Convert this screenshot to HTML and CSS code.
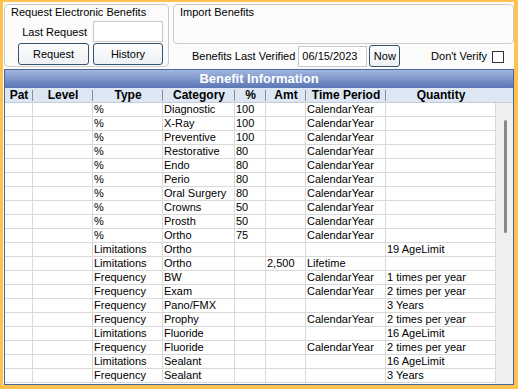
FILE: index.html
```html
<!DOCTYPE html>
<html lang="en">
  <head>
    <meta charset="UTF-8" />
    <meta name="viewport" content="width=device-width, initial-scale=1.0" />
    <title>Benefit Information</title>
    <link rel="stylesheet" href="styles.css">
  </head>
  <body>
    <div class="window">
      <div class="top">
        <div class="group request">
          <div class="group-title">Request Electronic Benefits</div>
          <div class="request-form">
            <span class="field-label">Last Request</span>
            <span class="text-box"></span>
            <button class="btn">Request</button>
            <button class="btn">History</button>
          </div>
        </div>

        <div class="right-col">
          <div class="group import">
            <div class="group-title">Import Benefits</div>
          </div>
          <div class="verify-row">
            <span class="verify-label">Benefits Last Verified</span>
            <span class="text-box date-box">06/15/2023</span>
            <button class="btn now-btn">Now</button>
            <span class="dont-verify">Don't Verify</span>
            <span class="check-box"></span>
          </div>
        </div>
      </div>

      <div class="grid">
        <div class="grid-title">Benefit Information</div>
        <div class="grid-head">
          <span>Pat</span>
          <span>Level</span>
          <span>Type</span>
          <span>Category</span>
          <span>%</span>
          <span>Amt</span>
          <span>Time Period</span>
          <span class="last">Quantity</span>
        </div>

        <div class="grid-body">
          <div class="rows">
            <div class="row"><span></span><span></span><span>%</span><span>Diagnostic</span><span>100</span><span></span><span>CalendarYear</span><span></span></div>
            <div class="row"><span></span><span></span><span>%</span><span>X-Ray</span><span>100</span><span></span><span>CalendarYear</span><span></span></div>
            <div class="row"><span></span><span></span><span>%</span><span>Preventive</span><span>100</span><span></span><span>CalendarYear</span><span></span></div>
            <div class="row"><span></span><span></span><span>%</span><span>Restorative</span><span>80</span><span></span><span>CalendarYear</span><span></span></div>
            <div class="row"><span></span><span></span><span>%</span><span>Endo</span><span>80</span><span></span><span>CalendarYear</span><span></span></div>
            <div class="row"><span></span><span></span><span>%</span><span>Perio</span><span>80</span><span></span><span>CalendarYear</span><span></span></div>
            <div class="row"><span></span><span></span><span>%</span><span>Oral Surgery</span><span>80</span><span></span><span>CalendarYear</span><span></span></div>
            <div class="row"><span></span><span></span><span>%</span><span>Crowns</span><span>50</span><span></span><span>CalendarYear</span><span></span></div>
            <div class="row"><span></span><span></span><span>%</span><span>Prosth</span><span>50</span><span></span><span>CalendarYear</span><span></span></div>
            <div class="row"><span></span><span></span><span>%</span><span>Ortho</span><span>75</span><span></span><span>CalendarYear</span><span></span></div>
            <div class="row"><span></span><span></span><span>Limitations</span><span>Ortho</span><span></span><span></span><span></span><span>19 AgeLimit</span></div>
            <div class="row"><span></span><span></span><span>Limitations</span><span>Ortho</span><span></span><span>2,500</span><span>Lifetime</span><span></span></div>
            <div class="row"><span></span><span></span><span>Frequency</span><span>BW</span><span></span><span></span><span>CalendarYear</span><span>1 times per year</span></div>
            <div class="row"><span></span><span></span><span>Frequency</span><span>Exam</span><span></span><span></span><span>CalendarYear</span><span>2 times per year</span></div>
            <div class="row"><span></span><span></span><span>Frequency</span><span>Pano/FMX</span><span></span><span></span><span></span><span>3 Years</span></div>
            <div class="row"><span></span><span></span><span>Frequency</span><span>Prophy</span><span></span><span></span><span>CalendarYear</span><span>2 times per year</span></div>
            <div class="row"><span></span><span></span><span>Limitations</span><span>Fluoride</span><span></span><span></span><span></span><span>16 AgeLimit</span></div>
            <div class="row"><span></span><span></span><span>Frequency</span><span>Fluoride</span><span></span><span></span><span>CalendarYear</span><span>2 times per year</span></div>
            <div class="row"><span></span><span></span><span>Limitations</span><span>Sealant</span><span></span><span></span><span></span><span>16 AgeLimit</span></div>
            <div class="row"><span></span><span></span><span>Frequency</span><span>Sealant</span><span></span><span></span><span></span><span>3 Years</span></div>
          </div>
          <div class="scrollbar">
            <div class="thumb"></div>
          </div>
        </div>
      </div>
    </div>
  </body>
</html>
```

FILE: styles.css
```css
:root {
  --orange: #ffc24f;
  --window-bg: #fbfbfb;
  --group-border: #cbcbcb;
  --btn-border: #35526f;
  --grid-border: #4b6696;
  --grid-line: #d9d9d9;
  --head-bg: #dde7f3;
  --cols: 28px 60px 70px 72px 31px 40px 80px 110px;
}
body {
  margin: 0;
  font-family: "Liberation Sans", Arial, sans-serif;
  font-size: 11px;
  color: #000000;
}
.window {
  width: 518px;
  height: 389px;
  box-sizing: border-box;
  border-style: solid;
  border-color: var(--orange);
  border-width: 2px 4px 4px 3px;
  background-color: var(--window-bg);
  display: flex;
  flex-direction: column;
}

/* top area */
.top {
  display: flex;
  gap: 4px;
  height: 67px;
  box-sizing: border-box;
  padding: 2px 0 0 1px;
}
.group {
  border: 1px solid var(--group-border);
  border-radius: 4px;
  box-sizing: border-box;
}
.group-title {
  line-height: 13px;
  padding: 1px 0 0 6px;
}
.request {
  width: 165px;
  height: 63px;
}
.request-form {
  display: grid;
  grid-template-columns: 71px 70px;
  grid-template-rows: 21px 22px;
  column-gap: 4px;
  row-gap: 1px;
  margin: 2px 0 0 13px;
}
.field-label {
  align-self: center;
  text-align: right;
  padding-right: 2px;
}
.text-box {
  display: block;
  background-color: #ffffff;
  border: 1px solid #c8c8c8;
  box-sizing: border-box;
}
.btn {
  font-family: inherit;
  font-size: 11px;
  color: #000000;
  padding: 0;
  border: 1px solid var(--btn-border);
  border-radius: 3px;
  background: linear-gradient(#fdfdfd, #edf0f4);
}
.right-col {
  flex: 1;
  display: flex;
  flex-direction: column;
}
.import {
  height: 40px;
}
.verify-row {
  display: flex;
  align-items: center;
  height: 22px;
  margin-top: 1px;
}
.verify-label {
  margin-left: 19px;
}
.date-box {
  width: 69px;
  height: 21px;
  line-height: 19px;
  padding-left: 3px;
  margin-left: 3px;
}
.now-btn {
  width: 31px;
  height: 22px;
  margin-left: 2px;
}
.dont-verify {
  margin-left: auto;
}
.check-box {
  width: 12px;
  height: 12px;
  box-sizing: border-box;
  border: 1px solid #333333;
  background-color: #ffffff;
  margin: 1px 10px 0 5px;
}

/* grid */
.grid {
  height: 316px;
  margin-left: 1px;
  width: 510px;
  box-sizing: border-box;
  border: 1px solid var(--grid-border);
  display: flex;
  flex-direction: column;
  background-color: #ffffff;
}
.grid-title {
  height: 18px;
  line-height: 18px;
  text-align: center;
  font-size: 13px;
  font-weight: bold;
  color: #ffffff;
  background: linear-gradient(#a3b6df, #5975b3);
}
.grid-head {
  display: grid;
  grid-template-columns: var(--cols) 1fr;
  height: 15px;
  box-sizing: border-box;
  border-bottom: 1px solid #c5ccd6;
  background-color: var(--head-bg);
}
.grid-head span {
  line-height: 14px;
  text-align: center;
  font-size: 12px;
  font-weight: bold;
  white-space: nowrap;
  background: linear-gradient(#8e8e8e, #8e8e8e) no-repeat right 0 top 2px / 1px 11px;
}
.grid-head span.last {
  background: none;
}
.grid-body {
  flex: 1;
  display: flex;
  overflow: hidden;
}
.rows {
  width: 491px;
}
.row {
  display: grid;
  grid-template-columns: var(--cols);
}
.row span {
  height: 14px;
  box-sizing: border-box;
  border-right: 1px solid var(--grid-line);
  border-bottom: 1px solid var(--grid-line);
  line-height: 13px;
  padding-left: 1px;
  white-space: nowrap;
  overflow: hidden;
}
.scrollbar {
  flex: 1;
  background-color: #f0f0f0;
}
.thumb {
  width: 3px;
  height: 113px;
  margin: 17px 0 0 8px;
  border-radius: 2px;
  background-color: #888888;
}
```
